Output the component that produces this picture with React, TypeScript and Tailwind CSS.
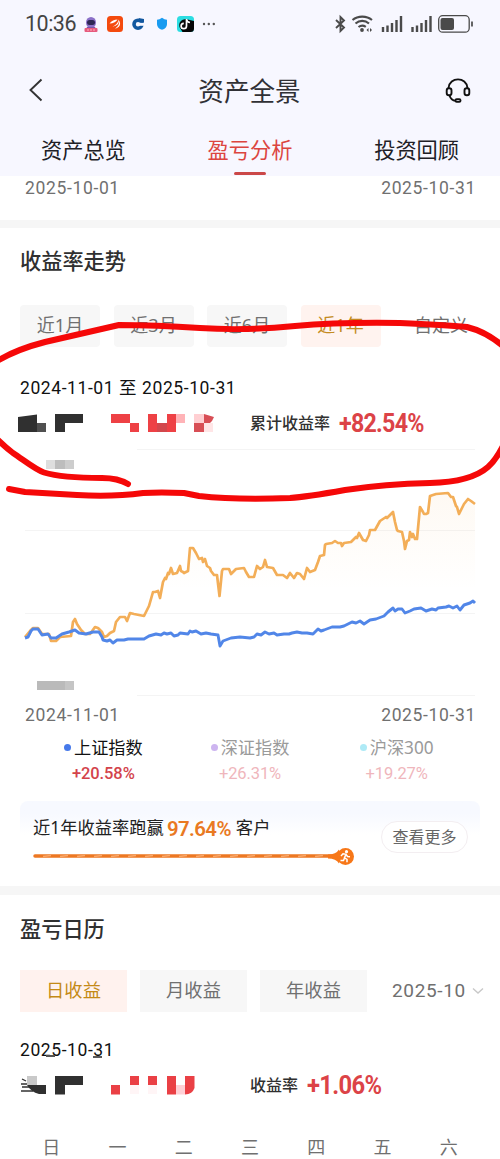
import React from "react";

const ranges = ["近1月", "近3月", "近6月", "近1年"];
const periods = ["日收益", "月收益", "年收益"];
const weekdays = ["日", "一", "二", "三", "四", "五", "六"];

const indexes = [
  { name: "上证指数", value: "+20.58%", dot: "bg-[#4679ea]", text: "text-[#111]", pct: "text-[#d3434b]", weight: "font-medium" },
  { name: "深证指数", value: "+26.31%", dot: "bg-[#cdb5f0]", text: "text-[#9a9a9a]", pct: "text-[#efb6bc]", weight: "font-normal" },
  { name: "沪深300", value: "+19.27%", dot: "bg-[#aeeaf6]", text: "text-[#9a9a9a]", pct: "text-[#efb6bc]", weight: "font-normal" },
];

const accountLine =
  "25,637 30,631 33,628 38,628 42,634 47,634 49,634 51,641 56,641 60,637 71,636 73,622 75,619 77,624 81,630 85,634 90,634 95,627 98,628 102,632 104,637 107,636 110,633 114,631 116,622 120,617 125,617 127,621 130,613 134,614 144,616 147,610 149,606 151,599 153,592 155,592 158,591 160,598 163,582 165,578 166,579 168,573 169,574 171,568 173,574 177,573 180,566 181,571 183,572 184,573 188,571 190,548 193,548 196,553 199,559 202,558 203,562 205,559 207,566 210,568 211,571 214,575 217,575 219.5,596 222,571 223,569 229,569 231,574 236,569 244,568 246,572 249,577 254,577 257,566 260,569 263,567 265,560 267,567 273,568 277,575 283,575 287,578 290,573 294,578 297,573 300,574 304,579 307,568 310,572 315,570 318,562 320,556 324,555 325,545 326,544 332,543 335,541 338,543 341,543 342,546 344,543 351,542 356,537 357,538 359,533 363,540 366,541 369,535 370,530 375,530 380,521 386,517 387,518 393,512 395,522 397,530 398,531 402,532 404,541 405,549 407,541 409,540 410,532 412,537 413,534 415,539 417,539 420,507 423,512 424,514 426,514 428,513 430,496 436,494 448,493 451,497 453,497 456,506 457,507 459,514 462,508 464,504 468,499 471,501 475,504";
const indexLine =
  "25,638 28,637 31,631 33,629 38,629 42,635 48,634 51,638 56,638 62,634 69,632 75,630 79,633 86,634 93,632 99,632 102,637 103,640 107,641 110,640 113,643 117,640 124,640 128,639 144,639 149,636 156,634 161,635 164,633 167,634 171,633 174,636 178,635 180,633 188,634 190,631 192,632 196,631 201,634 206,633 211,634 218,635 220,646 223,641 231,638 240,637 250,638 254,637 257,634 261,635 265,632 269,634 274,633 277,635 284,634 289,634 292,633 297,632 302,633 307,633 313,634 318,629 321,631 324,630 332,627 340,627 344,626 352,622 356,623 360,621 364,624 370,620 376,619 384,616 388,612 393,608 395,611 398,609 402,609 405,613 410,611 414,609 421,608 426,611 432,609 436,610 438,608 446,607 449,606 453,608 457,606 460,610 464,605 470,603 473,601 475,603";

function StatusBar() {
  return (
    <div className="flex h-12 items-center justify-between pl-[25px] pr-[26px]">
      <div className="flex items-center">
        <span className="w-[58px] font-[Roboto] text-[21.500px] tracking-[-0.500px] text-[#444]">10:36</span>
        <svg width="134" height="18" viewBox="82 15 134 18">
          <ellipse cx="90" cy="22.500" rx="5" ry="5.500" fill="#8b70c8" />
          <rect x="86" y="20" width="8" height="5" rx="2.500" fill="#2d2754" />
          <path d="M84 31l2-4h8l2 4z" fill="#7b55a5" />
          <rect x="83.500" y="28" width="13" height="4" rx="1" fill="#e65a7d" />
          <path d="M86 30h8" stroke="#ffb0bd" strokeDasharray="2 1" />
          <rect x="106" y="16" width="16" height="16" rx="3.500" fill="#f44a0e" />
          <path d="M108.500 23.500c2-2.500 5-4 8-4-1 2-4 4-8 4zM111.500 26.500c3-1 5.500-3.500 6-7 1.500 3-1.500 7-6 7zM114 28.500c3-1.500 4.500-4.500 4.300-8 2 3.500.2 7.500-4.300 8z" fill="#fff" />
          <circle cx="137" cy="24.200" r="4" fill="none" stroke="#12579f" strokeWidth="3.600" />
          <path d="M138 22.800h6v3h-6z" fill="#f7f7ff" />
          <path d="M137.500 18l5.500 1v3.500h-3z" fill="#12579f" />
          <path d="M161 17.800c1.700 1.300 3.200 1.800 5 1.900v4.500c0 2.600-2 4.600-5 5.500-3-.9-5-2.900-5-5.500v-4.500c1.800-.1 3.300-.6 5-1.900z" fill="#199bf0" />
          <rect x="176" y="16" width="17" height="16" rx="3.500" fill="#2cdde2" />
          <path d="M193 21v7.500a3.500 3.500 0 01-3.500 3.500h-8l-3-5 6-8z" fill="#050505" />
          <circle cx="184" cy="25" r="5.800" fill="#090909" />
          <path d="M185.500 19v7a2.700 2.700 0 11-2.700-2.700M185.500 19.500c.5 2 1.500 2.800 3.500 3" fill="none" stroke="#fff" strokeWidth="1.700" />
          <g fill="#555">
            <circle cx="203" cy="24" r="1.200" />
            <circle cx="207.800" cy="24" r="1.200" />
            <circle cx="212.800" cy="24" r="1.200" />
          </g>
        </svg>
      </div>
      <svg width="140" height="20" viewBox="334 14 140 20" fill="none" stroke="#4a4a4a">
        <path d="M336 20l8 7.500-3.500 3.500V17l3.500 3.500-8 7.500" strokeWidth="1.900" />
        <path d="M352.500 20c5.500-4.500 14-4.500 19.500 0M355.500 23.500c4-3.500 9.500-3.500 13.500 0M358.500 27c2.300-1.800 5-1.800 7.300-.2" strokeWidth="2.100" />
        <circle cx="362" cy="30" r="1.900" fill="#4a4a4a" stroke="none" />
        <path d="M368.500 28l-2 2 2 2zM370 28l2 2-2 2z" fill="#4a4a4a" stroke="none" />
        <path d="M383 32v-5M387.500 32v-6.500M392 32v-9M396.500 32v-12M401 32V16" strokeWidth="2.400" />
        <path d="M412.500 32v-5M417 32v-6.500M421.500 32v-9M426 32v-12M430.500 32V16" strokeWidth="2.400" />
        <rect x="438.700" y="15.700" width="30.500" height="16.500" rx="4" strokeWidth="1.300" />
        <rect x="440.500" y="18" width="13.500" height="12" rx="2" fill="#4a4a4a" stroke="none" />
        <path d="M472 21.500v5" strokeWidth="1.700" />
      </svg>
    </div>
  );
}

function Header() {
  return (
    <header className="h-[176px] bg-[#f7f7ff]">
      <StatusBar />
      <div className="flex h-[84px] items-center justify-between pl-[28px] pr-[29px]">
        <svg width="16" height="24" viewBox="0 0 16 24" fill="none" stroke="#333" strokeWidth="1.900">
          <path d="M13.500 1.500L2.500 12l11 10.500" />
        </svg>
        <h1 className="pl-[10px] pt-[3px] text-[25.600px] leading-none text-[#303035]">资产全景</h1>
        <svg width="26" height="26" viewBox="445 77 26 26" fill="none" stroke="#111" strokeWidth="1.900">
          <path d="M448.500 88c1-11.500 18-11.500 19 0" />
          <rect x="446.700" y="88.200" width="4.800" height="7" rx="2.300" />
          <rect x="464.500" y="88.200" width="4.800" height="7" rx="2.300" />
          <path d="M449.500 95.500c1 3 3 5 6 5.300" />
          <rect x="455.500" y="99.300" width="5" height="2.600" rx="1.200" />
        </svg>
      </div>
      <nav className="flex h-[44px] justify-between px-[41px] text-[21.200px] leading-[35px] text-[#202026]">
        <span>资产总览</span>
        <span className="flex flex-col items-center text-[#dc453f]">
          盈亏分析
          <i className="mt-[5px] h-[3px] w-8 shrink-0 rounded-full bg-[#cb4848]" />
        </span>
        <span>投资回顾</span>
      </nav>
    </header>
  );
}

function DateRange({ from, to }: { from: string; to: string }) {
  return (
    <div className="flex justify-between pl-[25px] pr-6 font-[Roboto] text-[17.500px] leading-6 tracking-[0.650px] text-[#707070]">
      <span>{from}</span>
      <span>{to}</span>
    </div>
  );
}

// amounts are hidden behind mosaic blocks
function HiddenTotal() {
  return (
    <svg width="230" height="20" viewBox="20 414 230 20" overflow="visible">
      <path d="M18 417l19-2.500V423h9v9H18zM55 414h28v9H65v9H55z" fill="#303030" />
      <path d="M37 423h9v9h-9z" fill="#505050" />
      <path d="M111 414h19v9h9v9h-9v-9h-19zM148 414h9v9h10v-9h9v18h-28z" fill="#ee4145" />
      <path d="M157 423h10v9h-10z" fill="#d2474c" />
      <path d="M176 414h9v9h-9z" fill="#ffb3b7" />
      <path d="M194 414h10v9h-10z" fill="#ffcfd2" />
      <path d="M204 414l10 3-2 4-2 2h-6v9h-10v-9h10z" fill="#d84e55" />
      <path d="M204 423h9v9h-9z" fill="#ffe5e6" />
    </svg>
  );
}

function HiddenDaily() {
  return (
    <svg width="230" height="20" viewBox="20 1076 230 20" overflow="visible">
      <path d="M22 1079l4 2M21 1084h6M22 1087h7M21 1091h12" stroke="#333" strokeWidth="1.300" />
      <path d="M27 1076h10v9H27z" fill="#c9c9c9" />
      <path d="M27 1085h19v9h-7q-8-2-12-9zM55 1076h28v9H65v9.500H55z" fill="#303030" />
      <path d="M111 1085h9v9.500h-9zM130 1076h9v9h-9zM148 1076h9v9h-9zM167 1076h9v18.500h-9zM185 1076h9.500v12q-2 6-9.500 6.500z" fill="#ea4045" />
      <path d="M176 1085h9v9.500h-9z" fill="#ffd0d6" />
      <path d="M130 1085h9v9h-9zM148 1085h9v9h-9z" fill="#fff5f6" />
      <path d="M46 1056h9" stroke="#555" strokeWidth="2" />
      <path d="M93 1057h9" stroke="#222" strokeWidth="1.500" />
    </svg>
  );
}

function TrendChart() {
  return (
    <svg className="block" width="500" height="263" viewBox="0 440 500 263" fill="none">
      <defs>
        <linearGradient id="fade" x1="0" y1="493" x2="0" y2="590" gradientUnits="userSpaceOnUse">
          <stop stopColor="#f5ad56" stopOpacity="0.070" />
          <stop offset="1" stopColor="#f5ad56" stopOpacity="0" />
        </linearGradient>
      </defs>
      <path d="M137 449.500H475M25 530.500H475M25 613.500H475M137 695.500H475" stroke="#f4f4f4" />
      <polygon points={`25,695 ${accountLine} 475,695`} fill="url(#fade)" />
      <polyline points={accountLine} stroke="#f3ae58" strokeWidth="2.700" strokeLinejoin="round" />
      <polyline points={indexLine} stroke="#5186e8" strokeWidth="2.900" strokeLinejoin="round" />
      <path d="M46 460h9v9h-9z" fill="#dedede" />
      <path d="M55 460h10v9H55z" fill="#bdbdbd" />
      <path d="M65 460h9v9h-9z" fill="#cdcdcd" />
      <path d="M37 681h28v9H37z" fill="#bababa" />
      <path d="M65 681h9v9h-9z" fill="#c5c5c5" />
    </svg>
  );
}

function RankCard() {
  return (
    <div className="mx-5 flex h-[84px] rounded-lg bg-linear-to-b from-[#f7f9ff] from-15% to-white to-40% pl-[13px]">
      <div className="w-[348px] pt-[13px]">
        <div className="flex h-7 items-center whitespace-nowrap text-[17.300px] text-[#222]">
          <span>近1年收益率跑赢</span>
          <b className="ml-[3px] mr-[3px] inline-block w-[66px] pt-[3px] font-[Roboto] text-[21px] leading-none font-semibold tracking-[-0.600px] text-[#e97922]">
            <span className="inline-block origin-left scale-x-97">97.64%</span>
          </b>
          <span>客户</span>
        </div>
        <svg className="mt-[4px]" width="324" height="20" viewBox="33 846 324 20">
          <path d="M35 856h304" stroke="#ed7823" strokeWidth="3.500" strokeLinecap="round" />
          <path d="M43 856.500l8-1M60 856.500l8-1M77 856.500l8-1M94 856.500l8-1M111 856.500l8-1M128 856.500l8-1M145 856.500l8-1M162 856.500l8-1M179 856.500l8-1M196 856.500l8-1M213 856.500l8-1M230 856.500l8-1M247 856.500l8-1M264 856.500l8-1M281 856.500l8-1M298 856.500l8-1M315 856.500l8-1" stroke="#f9a869" strokeWidth="1.700" />
          <path d="M328 854.500q8 0 11-5v14q-3-5-11-5z" fill="#f77718" />
          <circle cx="345.500" cy="856.500" r="8.500" fill="#f77718" />
          <circle cx="346.500" cy="851.700" r="1.600" fill="#fff" />
          <path d="M341 856l2-2.200 3 .5-1.500 3.500 2.500 1.500v3M344.500 858l-1 2.500h-3M346 854.500l1.500 2 2.500.2" fill="none" stroke="#fff" strokeWidth="1.500" />
        </svg>
      </div>
      <button className="mt-[20px] h-[32px] w-[87px] rounded-full border border-[#f3eef1] bg-white text-[16px] leading-none text-[#666]">查看更多</button>
    </div>
  );
}

// hand drawn marker strokes over the return section
function Marker() {
  return (
    <svg className="pointer-events-none absolute left-0 top-0" width="500" height="520" viewBox="0 0 500 520" fill="none" stroke="#f50808" strokeWidth="6" strokeLinecap="round" strokeLinejoin="round">
      <path d="M128 484Q118 478 102 478Q62 478 44 472.500C36 470 25 461 13 453Q4 446-6 436" />
      <path d="M-6 363Q14 350 45 342Q80 334 119 325Q155 325 200 328Q245 331 295 326Q340 322 400 323Q445 325 467 327Q487 332 504 347" />
      <path d="M504 444Q496 460 488 467Q471 482 430 483Q385 484 345 490Q306 497 290 498Q235 500 199 496L184 493Q160 492 143 493Q113 497 77 495L25 492L9 489" />
    </svg>
  );
}

export default function App() {
  return (
    <div className="relative h-[1159px] w-[500px] overflow-hidden bg-white font-['Noto_Sans','Noto_Sans_CJK_SC',sans-serif]">
      <Header />
      <div className="h-[44px]">
        <DateRange from="2025-10-01" to="2025-10-31" />
      </div>
      <div className="h-2 bg-[#f6f6f6]" />

      <section className="h-[658px]">
        <h2 className="flex h-[77px] items-center px-5 pb-[11px] text-[21.200px] font-medium text-[#303030]">收益率走势</h2>
        <div className="flex h-[42px] gap-[13.500px] pl-5 text-[18px] text-[#707070]">
          {ranges.map((r) => (
            <button
              key={r}
              className={`w-20 rounded pb-[2px] ${r === "近1年" ? "bg-[#fff3ef] text-[#c48b22]" : "bg-[#f7f7f7]"}`}
            >
              {r}
            </button>
          ))}
          <button className="ml-[20px] pb-[2px]">自定义</button>
        </div>
        <div className="mt-[28px] h-6 whitespace-nowrap pl-5 font-[Roboto,'Noto_Sans_CJK_SC'] text-[17.500px] leading-[26px] tracking-[0.580px] text-[#111]">2024-11-01 至 2025-10-31</div>
        <div className="flex h-[41px] items-center pl-5 pt-[8px]">
          <HiddenTotal />
          <span className="w-[89px] whitespace-nowrap pb-[2px] text-[16px] font-medium text-[#303030]">累计收益率</span>
          <b className="inline-block origin-left scale-x-93 font-[Roboto] text-[25px] leading-none tracking-[-0.800px] text-[#dc4347]">+82.54%</b>
        </div>
        <TrendChart />
        <DateRange from="2024-11-01" to="2025-10-31" />
        <div className="flex h-[74px] px-[30px] pt-[7px]">
          {indexes.map((it) => (
            <div key={it.name} className="flex flex-1 flex-col items-center">
              <div className={`flex items-center gap-[3px] text-[17.200px] leading-[27px] ${it.text}`}>
                <i className={`h-[7px] w-[7px] rounded-full ${it.dot}`} />
                {it.name}
              </div>
              <span className={`font-[Roboto] text-[16.500px] leading-[26px] tracking-[-0.100px] ${it.weight} ${it.pct}`}>{it.value}</span>
            </div>
          ))}
        </div>
        <RankCard />
      </section>
      <div className="h-[9px] bg-[#f6f6f6]" />

      <section>
        <h2 className="flex h-[75px] items-center px-5 pb-[8px] text-[21.200px] font-medium text-[#303030]">盈亏日历</h2>
        <div className="flex h-[42px] gap-[13px] pl-5 text-[18.300px] text-[#707070]">
          {periods.map((p, i) => (
            <button key={p} className={`w-[107px] pb-[2px] ${i === 0 ? "bg-[#fff2ee] text-[#c48a16]" : "bg-[#f7f7f7]"}`}>
              {p}
            </button>
          ))}
          <button className="ml-[12px] flex items-center gap-[6px] font-[Roboto] text-[19px] tracking-[0.650px]">
            2025-10
            <svg width="12" height="8" viewBox="0 0 12 8" fill="none" stroke="#c8c8c8" strokeWidth="1.400">
              <path d="M1 1.500l5 4.500 5-4.500" />
            </svg>
          </button>
        </div>
        <div className="mt-[26px] h-6 pl-5 font-[Roboto] text-[17.500px] leading-6 tracking-[0.580px] text-[#111]">2025-10-31</div>
        <div className="flex h-[48px] items-center pb-[1px] pl-5">
          <HiddenDaily />
          <span className="w-[57px] whitespace-nowrap pb-[2px] text-[16px] font-medium text-[#303030]">收益率</span>
          <b className="inline-block origin-left scale-x-95 font-[Roboto] text-[25px] leading-none tracking-[-0.700px] text-[#dc4347]">+1.06%</b>
        </div>
        <div className="flex h-[49px] items-end px-[18px] text-[18px] leading-6 text-[#707070]">
          {weekdays.map((d) => (
            <span key={d} className="flex-1 text-center">{d}</span>
          ))}
        </div>
      </section>
      <Marker />
    </div>
  );
}
